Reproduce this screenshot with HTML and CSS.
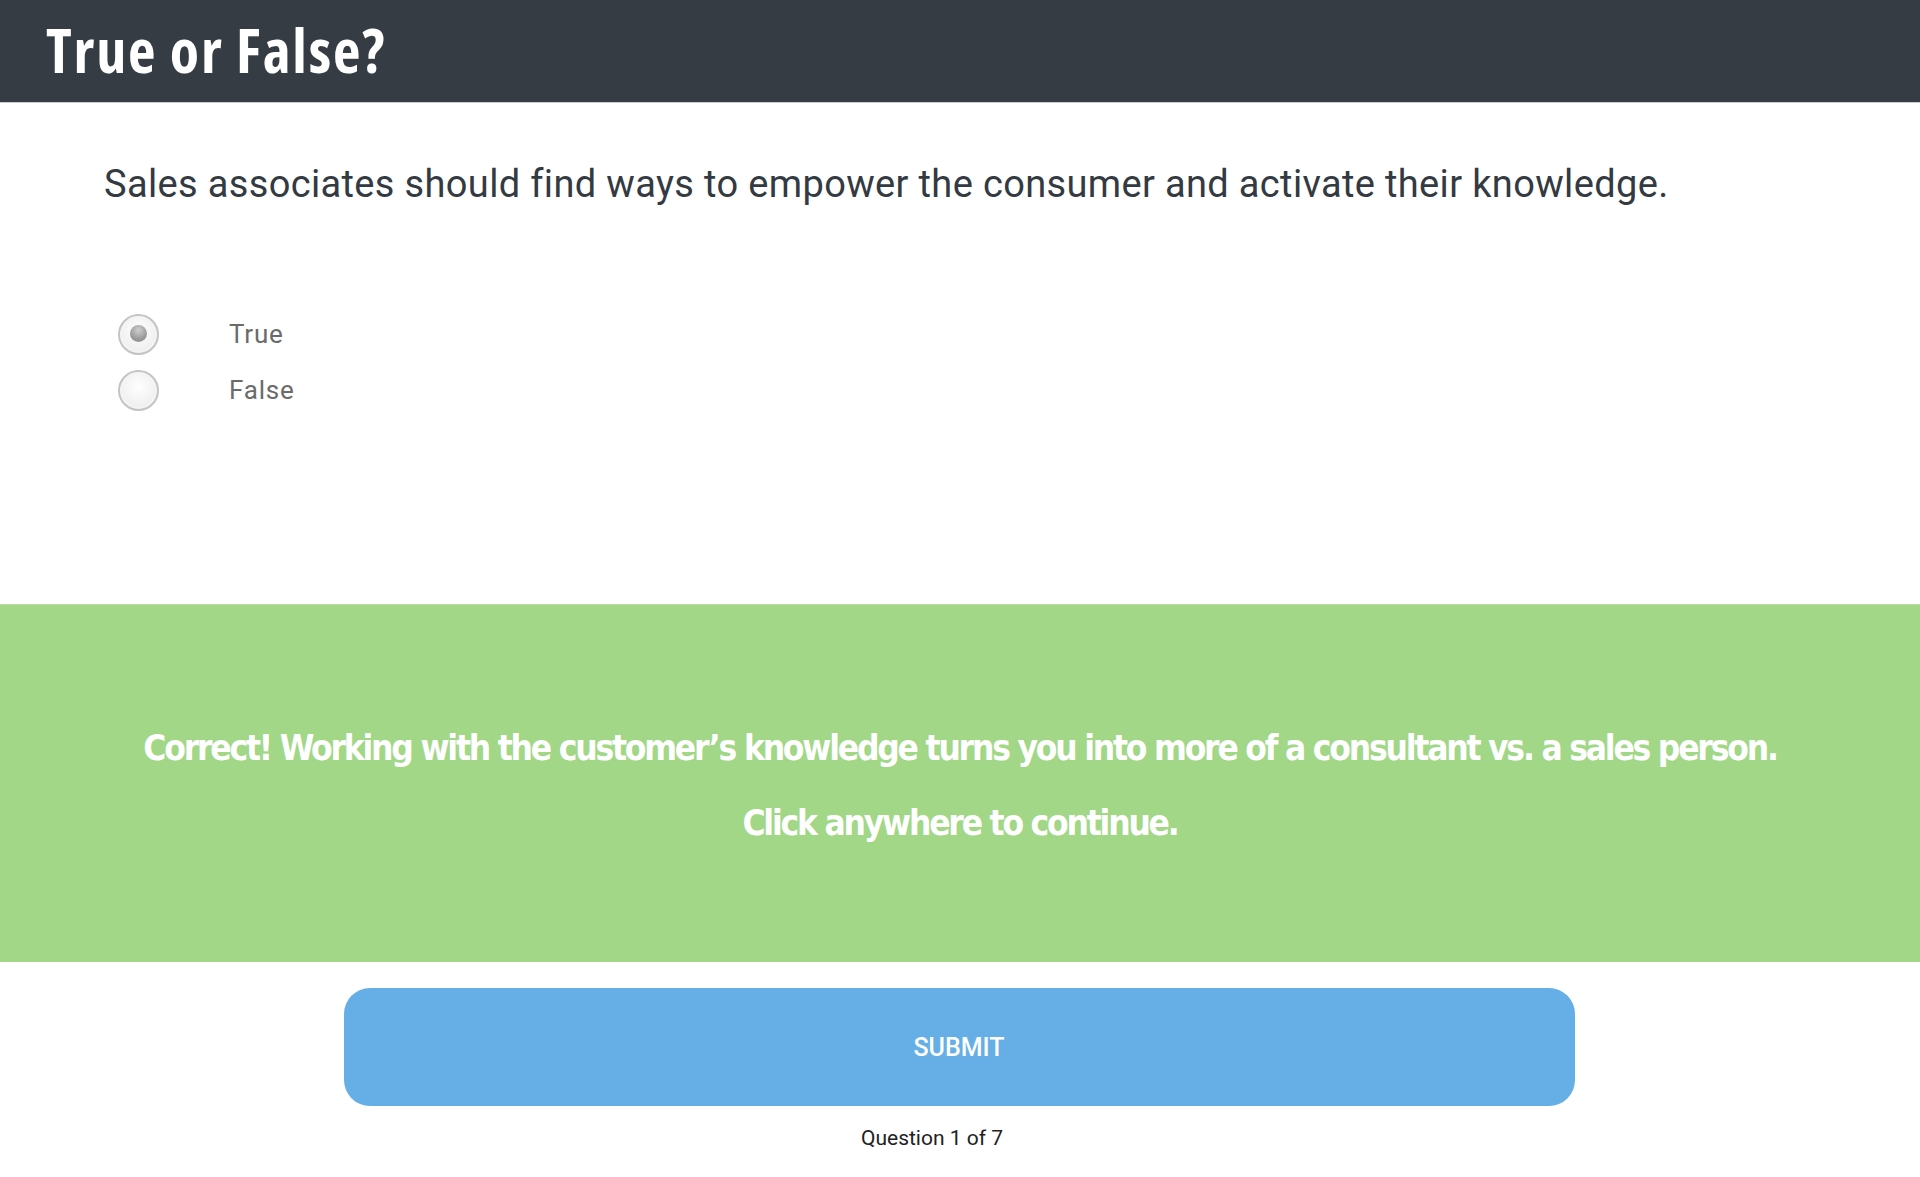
FILE: index.html
```html
<!DOCTYPE html>
<html>
<head>
<meta charset="utf-8">
<link rel="stylesheet" href="styles.css">
</head>
<body>
<header class="top">
  <h1 class="title">True or False?</h1>
</header>
<main class="quiz">
  <p class="question">Sales associates should find ways to empower the consumer and activate their knowledge.</p>
  <div class="options">
    <label class="option">
      <span class="radio checked"></span>
      <span class="opt-label">True</span>
    </label>
    <label class="option">
      <span class="radio"></span>
      <span class="opt-label">False</span>
    </label>
  </div>
</main>
<section class="feedback">
  <p class="fb-line">Correct! Working with the customer’s knowledge turns you into more of a consultant vs. a sales person.</p>
  <p class="fb-line">Click anywhere to continue.</p>
</section>
<div class="actions">
  <button class="submit">SUBMIT</button>
  <div class="progress">Question 1 of 7</div>
</div>
</body>
</html>
```
FILE: styles.css
```css
html, body {
  margin: 0;
  padding: 0;
  background: #ffffff;
}
body {
  font-family: Roboto, "Open Sans", sans-serif;
  width: 1920px;
}
.top {
  height: 102px;
  background: #353c44;
  border-bottom: 1px solid #c9cbcd;
  display: flex;
  align-items: center;
  padding-left: 46px;
}
.title {
  margin: 0;
  color: #ffffff;
  font-family: "Open Sans", sans-serif;
  font-weight: 700;
  font-size: 60px;
  font-stretch: 87.5%;
  letter-spacing: 1.8px;
  line-height: 1;
  margin-top: -2px;
}
.quiz {
  height: 501px;
  padding-left: 104px;
}
.question {
  margin: 0;
  padding-top: 58px;
  font-family: Roboto, sans-serif;
  font-size: 38px;
  line-height: 46px;
  color: #333a42;
  letter-spacing: 0.35px;
}
.options {
  margin-top: 107px;
  display: flex;
  flex-direction: column;
  gap: 16px;
}
.option {
  display: flex;
  align-items: center;
  height: 40px;
  margin-left: 14px;
}
.radio {
  width: 37px;
  height: 37px;
  border-radius: 50%;
  border: 2px solid #c4c4c4;
  background: radial-gradient(circle at 50% 40%, #ffffff 0%, #f1f1f1 60%, #e6e6e6 100%);
  box-shadow: inset 0 0 0 2px #f4f4f4;
  position: relative;
}
.radio.checked::after {
  content: "";
  position: absolute;
  left: 10px;
  top: 9px;
  width: 17px;
  height: 17px;
  border-radius: 50%;
  background: radial-gradient(circle at 50% 30%, #cfcfcf 0%, #9a9a9a 60%, #8a8a8a 100%);
}
.opt-label {
  margin-left: 70px;
  font-family: Roboto, sans-serif;
  font-size: 26px;
  letter-spacing: 0.8px;
  color: #6b6b6b;
}
.feedback {
  height: 358px;
  background: #a1d786;
  border-top: 1px solid #b9dfa6;
  box-sizing: border-box;
  display: flex;
  flex-direction: column;
  align-items: center;
  justify-content: center;
  gap: 38px;
  padding-top: 4px;
}
.fb-line {
  margin: 0;
  color: #ffffff;
  font-family: "DejaVu Sans Condensed", "DejaVu Sans", sans-serif;
  font-weight: 700;
  font-size: 35px;
  line-height: 37px;
  letter-spacing: -2.2px;
}
.actions {
  display: flex;
  flex-direction: column;
  align-items: center;
  padding-top: 26px;
}
.submit {
  width: 1231px;
  height: 118px;
  border: none;
  border-radius: 26px;
  background: #65afe6;
  color: #ffffff;
  font-family: Roboto, sans-serif;
  font-size: 25px;
  font-weight: 500;
  padding: 0;
  margin-left: -2px;
}
.progress {
  margin-top: 20px;
  margin-right: 56px;
  font-family: Roboto, sans-serif;
  font-size: 21px;
  color: #222;
}
```
